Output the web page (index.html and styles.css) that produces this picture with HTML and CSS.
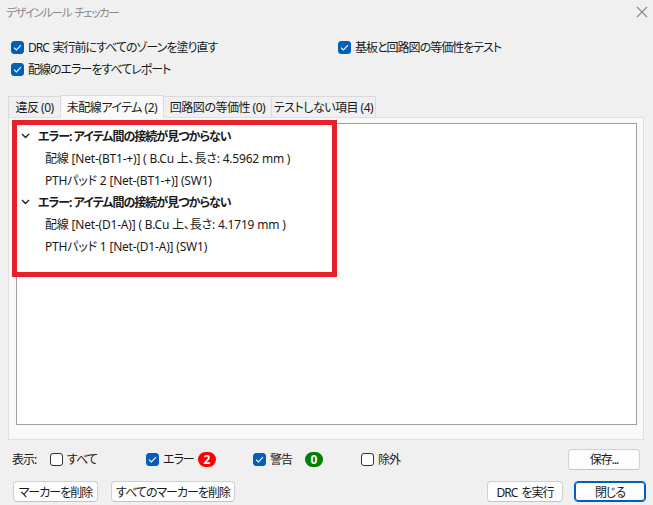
FILE: index.html
```html
<!DOCTYPE html>
<html lang="ja">
<head>
  <meta charset="UTF-8">
  <meta name="viewport" content="width=device-width, initial-scale=1.0">
  <title>デザインルール チェッカー</title>
  <link rel="stylesheet" href="styles.css">
</head>
<body>
  <div class="window">
    <div class="titlebar">
      <span class="title">デザインルール チェッカー</span>
      <svg class="close" width="12" height="12" viewBox="0 0 12 12">
        <path d="M1 1 L11 11 M11 1 L1 11" stroke="#8a8a8a" stroke-width="1.1" fill="none"/>
      </svg>
    </div>

    <div class="options">
      <label class="check"><span class="box on"><svg width="9" height="7" viewBox="0 0 9 7"><path d="M1 3.6 L3.4 6 L8 1.2" stroke="#fff" stroke-width="1.1" fill="none"/></svg></span>DRC 実行前にすべてのゾーンを塗り直す</label>
      <label class="check"><span class="box on"><svg width="9" height="7" viewBox="0 0 9 7"><path d="M1 3.6 L3.4 6 L8 1.2" stroke="#fff" stroke-width="1.1" fill="none"/></svg></span>基板と回路図の等価性をテスト</label>
      <label class="check"><span class="box on"><svg width="9" height="7" viewBox="0 0 9 7"><path d="M1 3.6 L3.4 6 L8 1.2" stroke="#fff" stroke-width="1.1" fill="none"/></svg></span>配線のエラーをすべてレポート</label>
    </div>

    <div class="tabs">
      <div class="tab tab-1">違反 (0)</div>
      <div class="tab tab-2 active">未配線アイテム (2)</div>
      <div class="tab tab-3">回路図の等価性 (0)</div>
      <div class="tab tab-4">テストしない項目 (4)</div>
    </div>

    <div class="panel">
      <div class="list">
        <div class="row error">
          <svg class="chev" width="9" height="6" viewBox="0 0 9 6"><path d="M1 1 L4.5 4.5 L8 1" stroke="#222" stroke-width="1.4" fill="none"/></svg>
          エラー: アイテム間の接続が見つからない
        </div>
        <div class="row item">配線 [Net-(BT1-+)] ( B.Cu 上、長さ: 4.5962 mm )</div>
        <div class="row item">PTHパッド 2 [Net-(BT1-+)] (SW1)</div>
        <div class="row error">
          <svg class="chev" width="9" height="6" viewBox="0 0 9 6"><path d="M1 1 L4.5 4.5 L8 1" stroke="#222" stroke-width="1.4" fill="none"/></svg>
          エラー: アイテム間の接続が見つからない
        </div>
        <div class="row item">配線 [Net-(D1-A)] ( B.Cu 上、長さ: 4.1719 mm )</div>
        <div class="row item">PTHパッド 1 [Net-(D1-A)] (SW1)</div>
      </div>
      <div class="highlight"></div>
    </div>

    <div class="filters">
      <span class="show-label">表示:</span>
      <label class="check f-all"><span class="box"></span>すべて</label>
      <label class="check f-err"><span class="box on"><svg width="9" height="7" viewBox="0 0 9 7"><path d="M1 3.6 L3.4 6 L8 1.2" stroke="#fff" stroke-width="1.1" fill="none"/></svg></span>エラー</label>
      <span class="badge red">2</span>
      <label class="check f-warn"><span class="box on"><svg width="9" height="7" viewBox="0 0 9 7"><path d="M1 3.6 L3.4 6 L8 1.2" stroke="#fff" stroke-width="1.1" fill="none"/></svg></span>警告</label>
      <span class="badge green">0</span>
      <label class="check f-excl"><span class="box"></span>除外</label>
      <button class="btn save-btn">保存...</button>
    </div>

    <div class="actions">
      <div class="left">
        <button class="btn btn-clear">マーカーを削除</button>
        <button class="btn btn-clear-all">すべてのマーカーを削除</button>
      </div>
      <div class="right">
        <button class="btn btn-run">DRC を実行</button>
        <button class="btn btn-default">閉じる</button>
      </div>
    </div>
  </div>
</body>
</html>
```

FILE: styles.css
```css
* {
  box-sizing: border-box;
}

body {
  margin: 0;
  background-color: #f0f0f0;
  font-family: "Noto Sans", "Noto Sans CJK JP", sans-serif;
  font-feature-settings: "palt";
  font-size: 12px;
  letter-spacing: -1px;
  word-spacing: 1.5px;
  color: #1a1a1a;
}

.window {
  width: 653px;
  height: 505px;
  position: relative;
}

.titlebar {
  height: 24px;
  display: flex;
  align-items: center;
  justify-content: space-between;
  padding: 0 5px 0 6px;
}

.title {
  color: #8a8a8a;
  font-size: 11.5px;
  letter-spacing: -1.4px;
}

.options {
  display: grid;
  grid-template-columns: 327px 1fr;
  margin: 12px 0 0 11px;
}

.check {
  display: flex;
  align-items: center;
  gap: 4px;
  height: 22px;
  white-space: nowrap;
}

.box {
  width: 13px;
  height: 13px;
  border: 1px solid #333;
  border-radius: 3px;
  background: #fff;
  display: flex;
  align-items: center;
  justify-content: center;
  flex-shrink: 0;
}

.box.on {
  background: #005fb8;
  border-color: #005fb8;
}

.tabs {
  display: flex;
  align-items: flex-end;
  margin: 15px 0 0 9px;
  height: 22px;
  position: relative;
  z-index: 1;
}

.tab {
  height: 21px;
  border: 1px solid #dadada;
  border-bottom: none;
  background: #f0f0f0;
  display: flex;
  align-items: center;
  justify-content: center;
  white-space: nowrap;
  letter-spacing: -0.5px;
  word-spacing: 0;
  margin-left: -1px;
}

.tab-1 { width: 53px; }
.tab-2 { width: 104px; }
.tab-3 { width: 109px; }
.tab-4 { width: 105px; }

.tab.active {
  height: 23px;
  background: #f9f9f9;
  margin-bottom: -1px;
}

.panel {
  margin: 0 9px 0 8px;
  height: 323px;
  border: 1px solid #e0e0e0;
  background: #f9f9f9;
  padding: 5px 6px 14px 7px;
  position: relative;
}

.list {
  height: 100%;
  background: #fff;
  border: 1px solid #a0a0a0;
  padding-top: 1px;
}

.row {
  height: 22px;
  display: flex;
  align-items: center;
  white-space: nowrap;
}

.row.error {
  font-weight: bold;
  padding-left: 4px;
  gap: 8px;
  word-spacing: 0;
}

.row.item {
  padding-left: 28px;
  letter-spacing: -0.2px;
  word-spacing: 0;
}

.highlight {
  position: absolute;
  left: 3px;
  top: 2px;
  width: 325px;
  height: 157px;
  border: 5px solid #e8202a;
}

.filters {
  display: flex;
  align-items: center;
  height: 22px;
  margin: 8px 0 0 12px;
}

.show-label { width: 38px; }
.f-all { width: 96px; }
.f-err { width: 52px; }
.f-warn { width: 52px; }
.f-excl { width: 207px; }

.badge {
  display: inline-flex;
  align-items: center;
  justify-content: center;
  width: 18px;
  height: 15px;
  border-radius: 8px;
  color: #fff;
  font-weight: bold;
  letter-spacing: 0;
  margin-right: 37px;
}

.badge.green {
  margin-right: 38px;
}

.badge.red {
  background: #ff0000;
}

.badge.green {
  background: #008000;
}

.btn {
  font-family: inherit;
  font-feature-settings: "palt";
  font-size: 12px;
  letter-spacing: -1px;
  word-spacing: 2px;
  color: #1a1a1a;
  height: 21px;
  padding: 0;
  white-space: nowrap;
  background: #fdfdfd;
  border: 1px solid #d0d0d0;
  border-bottom-color: #c4c4c4;
  border-radius: 4px;
}

.save-btn { width: 72px; }
.btn-clear { width: 85px; }
.btn-clear-all { width: 124px; }
.btn-run { width: 76px; }

.actions {
  display: flex;
  justify-content: space-between;
  margin: 11px 7px 0 13px;
}

.left, .right {
  display: flex;
  gap: 13px;
}

.right {
  gap: 11px;
}

.btn-default {
  width: 72px;
  border: 1px solid #005fb8;
  box-shadow: inset 0 0 0 1px #005fb8;
}
```
